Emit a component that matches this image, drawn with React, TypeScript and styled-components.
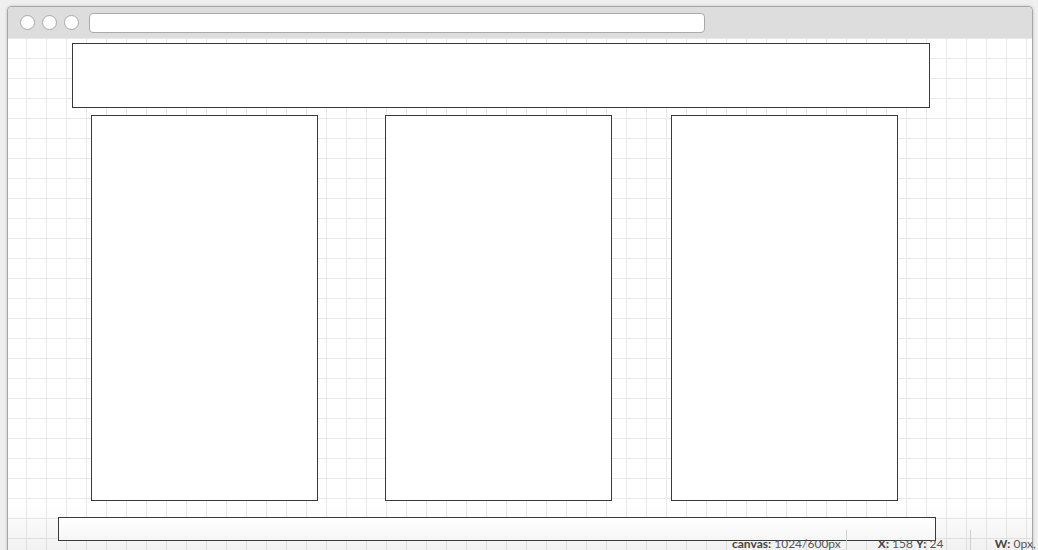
import React from "react";
import styled, { createGlobalStyle } from "styled-components";

const GlobalStyle = createGlobalStyle`
  html, body {
    margin: 0;
    padding: 0;
    background: #efefef;
    overflow: hidden;
  }
  body {
    font-family: Lato, "Open Sans", "Liberation Sans", sans-serif;
  }
  * { box-sizing: border-box; }
`;

const Page = styled.div`
  position: relative;
  width: 1038px;
  height: 550px;
  overflow: hidden;
  background: #efefef;
  padding: 6px 0 0 7px;
`;

const Window = styled.div`
  width: 1026px;
  height: 700px;
  border: 1px solid #a6a6a6;
  border-bottom: none;
  border-radius: 5px 5px 0 0;
  background: #ffffff;
  box-shadow: 0 0 3px rgba(0, 0, 0, 0.22);
  display: flex;
  flex-direction: column;
  overflow: hidden;
`;

const TitleBar = styled.div`
  height: 31px;
  flex: none;
  background: #dddddd;
  display: flex;
  align-items: center;
  gap: 7px;
  padding-left: 12px;
`;

const Light = styled.span`
  width: 15px;
  height: 15px;
  border-radius: 50%;
  border: 1px solid #a9a9a9;
  background: #ffffff;
  flex: none;
`;

const AddressBar = styled.div`
  margin-left: 3px;
  width: 616px;
  height: 20px;
  border: 1px solid #aaaaaa;
  border-radius: 4px;
  background: #ffffff;
`;

const Canvas = styled.div`
  position: relative;
  width: 1024px;
  height: 600px;
  flex: none;
  padding-top: 5px;
  background-color: #ffffff;
  background-image:
    linear-gradient(to right, #e9e9e9 1px, transparent 1px),
    linear-gradient(to bottom, #e9e9e9 1px, transparent 1px);
  background-size: 20px 20px;
  background-position: 18px 0;
`;

const Fade = styled.div`
  position: absolute;
  left: 0;
  right: 0;
  top: 467px;
  height: 60px;
  z-index: 1;
  pointer-events: none;
  background: linear-gradient(to bottom, rgba(0, 0, 0, 0), rgba(0, 0, 0, 0.055) 45px);
`;

const Box = styled.div<{ $w: number; $h: number; $left?: number; $top?: number }>`
  position: relative;
  z-index: 2;
  width: ${(p) => p.$w}px;
  height: ${(p) => p.$h}px;
  margin-left: ${(p) => p.$left ?? 0}px;
  margin-top: ${(p) => p.$top ?? 0}px;
  border: 1px solid #3a3a3a;
  background: #ffffff;
  flex: none;
`;

const FooterBox = styled(Box)`
  background: linear-gradient(to bottom, #ffffff, #f6f6f6);
`;

const ColumnsRow = styled.div`
  display: flex;
  margin-top: 7px;
  padding-left: 83px;
`;

const StatusBar = styled.div`
  position: absolute;
  left: 0;
  right: 0;
  top: 530px;
  height: 30px;
  z-index: 3;
  display: flex;
  padding-left: 732px;
  white-space: nowrap;
  font-size: 12px;
  line-height: 16px;
  color: #555555;
`;

const Cell = styled.div<{ $w?: number; $pad?: number; $divider?: boolean }>`
  flex: none;
  height: 30px;
  padding-top: 6px;
  padding-left: ${(p) => p.$pad ?? 0}px;
  padding-right: 5px;
  width: ${(p) => (p.$w ? `${p.$w}px` : "auto")};
  border-right: ${(p) => (p.$divider ? "1px solid #cfcfcf" : "none")};
`;

const Label = styled.b`
  font-weight: 700;
  color: #444444;
`;

export default function App() {
  return (
    <>
      <GlobalStyle />
      <Page>
        <Window>
          <TitleBar>
            <Light />
            <Light />
            <Light />
            <AddressBar />
          </TitleBar>
          <Canvas>
            <Fade />
            <Box $w={858} $h={65} $left={64} />
            <ColumnsRow>
              <Box $w={227} $h={386} />
              <Box $w={227} $h={386} $left={67} />
              <Box $w={227} $h={386} $left={59} />
            </ColumnsRow>
            <FooterBox $w={878} $h={24} $left={50} $top={16} />
          </Canvas>
        </Window>
        <StatusBar>
          <Cell $divider>
            <Label>canvas:</Label> 1024/600px
          </Cell>
          <Cell $w={124} $pad={31} $divider>
            <Label>X:</Label> 158 <Label>Y:</Label> 24
          </Cell>
          <Cell $pad={24}>
            <Label>W:</Label> 0px,
          </Cell>
        </StatusBar>
      </Page>
    </>
  );
}
